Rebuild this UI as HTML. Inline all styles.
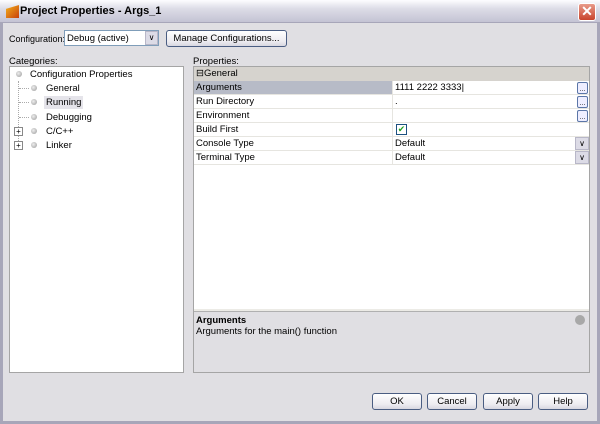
<!DOCTYPE html>
<html><head><style>
*{box-sizing:border-box;margin:0;padding:0}
body{width:600px;height:424px;overflow:hidden;font-family:"Liberation Sans",sans-serif;font-size:9.5px;color:#000;background:#e0dfe3;position:relative}
.a{position:absolute}
.frame{left:0;top:0;width:600px;height:424px;border:3px solid #a7a6b9;border-top:none;background:#e0dfe3}
.title{left:0;top:0;width:600px;height:23px;background:linear-gradient(#fdfdff,#dcdce6 40%,#c4c3d4);border-bottom:1px solid #a7a6b9}
.btn{border:1px solid #4a5d82;border-radius:3px;background:linear-gradient(#fff,#ecebf0 70%,#d8d7e0);text-align:center;line-height:15px;font-size:9.5px}
.row{position:absolute;left:0;width:396px;height:14px;border-bottom:1px solid #e6e5e0;line-height:14px}
.row span{position:absolute;left:2px}
.row b{font-weight:normal;position:absolute;left:198px;top:0;height:13px;border-left:1px solid #e6e5e0;padding-left:2px;width:198px}
.dot{position:absolute;width:6px;height:6px;border-radius:50%;background:radial-gradient(circle at 40% 40%,#eee,#999)}
.ell{position:absolute;right:2px;top:1px;width:11px;height:12px;border:1px solid #5b76a8;border-radius:2px;background:#eef;font-size:7px;line-height:14px;text-align:center}
.dd{position:absolute;right:1px;top:0;width:14px;height:13px;background:#dcdbe6;border:1px solid #b8b7c8;font-size:8px;line-height:11px;text-align:center}
</style></head><body>
<div class="a frame"></div>
<div class="a title"></div>
<div class="a" style="left:6px;top:5px;width:13px;height:13px;background:linear-gradient(135deg,#f3b21c,#c8400c);clip-path:polygon(0 30%,100% 0,100% 100%,0 100%)"></div>
<div class="a" style="left:20px;top:5px;font-weight:bold;font-size:11px;color:#000">Project Properties - Args_1</div>
<div class="a" style="left:578px;top:3px;width:18px;height:18px;border-radius:3px;background:linear-gradient(#e89b8a,#c9442c);border:1px solid #fff;color:#fff;font-size:14px;line-height:15px;text-align:center;font-weight:bold">✕</div>

<div class="a" style="left:9px;top:34px;font-size:9px">Configuration:</div>
<div class="a" style="left:64px;top:30px;width:95px;height:16px;border:1px solid #7f9db9;background:#fff;padding-left:2px;line-height:15px">Debug (active)</div>
<div class="a" style="left:145px;top:31px;width:13px;height:14px;background:#dcdbe6;border:1px solid #b8b7c8;font-size:8px;line-height:12px;text-align:center">&#8744;</div>
<div class="a btn" style="left:166px;top:30px;width:121px;height:17px">Manage Configurations...</div>

<div class="a" style="left:9px;top:56px">Categories:</div>
<div class="a" style="left:193px;top:56px">Properties:</div>

<div class="a" style="left:9px;top:66px;width:175px;height:307px;background:#fff;border:1px solid #a5a5a5"></div>
<div class="dot" style="left:16px;top:71px"></div><div class="a" style="left:30px;top:69px">Configuration Properties</div>
<div class="a" style="left:18px;top:81px;width:0;height:66px;border-left:1px dotted #aaa"></div>
<div class="a" style="left:19px;top:88px;width:10px;border-top:1px dotted #aaa"></div><div class="dot" style="left:31px;top:85px"></div><div class="a" style="left:46px;top:83px">General</div>
<div class="a" style="left:19px;top:102px;width:10px;border-top:1px dotted #aaa"></div><div class="dot" style="left:31px;top:99px"></div><div class="a" style="left:44px;top:96px;background:#e5e4ea;padding:1px 2px">Running</div>
<div class="a" style="left:19px;top:117px;width:10px;border-top:1px dotted #aaa"></div><div class="dot" style="left:31px;top:114px"></div><div class="a" style="left:46px;top:112px">Debugging</div>
<div class="a" style="left:14px;top:127px;width:9px;height:9px;border:1px solid #888;background:#fff;font-size:8px;line-height:7px;text-align:center">+</div><div class="dot" style="left:31px;top:128px"></div><div class="a" style="left:46px;top:126px">C/C++</div>
<div class="a" style="left:14px;top:141px;width:9px;height:9px;border:1px solid #888;background:#fff;font-size:8px;line-height:7px;text-align:center">+</div><div class="dot" style="left:31px;top:142px"></div><div class="a" style="left:46px;top:140px">Linker</div>

<div class="a" style="left:193px;top:66px;width:397px;height:307px;border:1px solid #a5a5a5;background:#fff;overflow:hidden">
 <div class="row" style="top:0;background:#d6d3ce;border:none;height:14px"><span>&#8863;General</span></div>
 <div class="row" style="top:14px"><span style="left:0;width:198px;height:13px;background:#b7bbc7;padding-left:2px">Arguments</span><b>1111 2222 3333|</b><div class="ell">...</div></div>
 <div class="row" style="top:28px"><span>Run Directory</span><b>.</b><div class="ell">...</div></div>
 <div class="row" style="top:42px"><span>Environment</span><b></b><div class="ell">...</div></div>
 <div class="row" style="top:56px"><span>Build First</span><b><i style="position:absolute;left:3px;top:1px;width:11px;height:11px;border:1px solid #1c5180;color:#21a121;font-size:9px;line-height:9px;text-align:center;font-style:normal">✔</i></b></div>
 <div class="row" style="top:70px"><span>Console Type</span><b>Default</b><div class="dd">&#8744;</div></div>
 <div class="row" style="top:84px"><span>Terminal Type</span><b>Default</b><div class="dd">&#8744;</div></div>
 <div class="a" style="left:0;top:242px;width:397px;height:3px;background:#ecebe6;border-bottom:1px solid #b0b0b0"></div>
 <div class="a" style="left:0;top:245px;width:397px;height:62px;background:#e0dfe3"></div>
 <div class="a" style="left:2px;top:248px;font-weight:bold">Arguments</div>
 <div class="a" style="left:2px;top:259px">Arguments for the main() function</div>
 <div class="a" style="left:381px;top:248px;width:10px;height:10px;border-radius:50%;background:#a8a8a8"></div>
</div>

<div class="a btn" style="left:372px;top:393px;width:50px;height:17px">OK</div>
<div class="a btn" style="left:427px;top:393px;width:50px;height:17px">Cancel</div>
<div class="a btn" style="left:483px;top:393px;width:50px;height:17px">Apply</div>
<div class="a btn" style="left:538px;top:393px;width:50px;height:17px">Help</div>
</body></html>
